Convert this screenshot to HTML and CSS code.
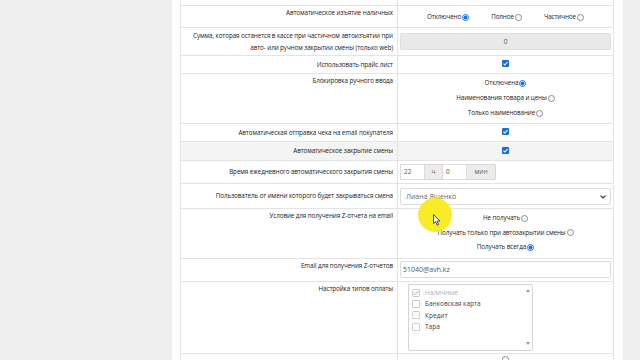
FILE: index.html
```html
<!DOCTYPE html>
<html lang="ru">
<head>
<meta charset="utf-8">
<title>Настройки</title>
<link rel="stylesheet" href="styles.css">
</head>
<body>
<div class="page">
  <div class="side"></div>
  <main class="panel">
    <div class="settings">
      <div class="row r0"><div class="lbl"></div><div class="val"></div></div>

      <div class="row r1">
        <div class="lbl">Автоматическое изъятие наличных</div>
        <div class="val hopts">
          <span class="opt">Отключено<i class="radio on"></i></span>
          <span class="opt">Полное<i class="radio"></i></span>
          <span class="opt">Частичное<i class="radio"></i></span>
        </div>
      </div>

      <div class="row r2">
        <div class="lbl">Сумма, которая останется в кассе при частичном автоизъятии при авто- или ручном закрытии смены (только web)</div>
        <div class="val"><div class="field disabled center">0</div></div>
      </div>

      <div class="row r3">
        <div class="lbl">Использовать прайс лист</div>
        <div class="val cbcell"><i class="check"></i></div>
      </div>

      <div class="row r4">
        <div class="lbl">Блокировка ручного ввода</div>
        <div class="val vopts">
          <span class="opt">Отключена<i class="radio on"></i></span>
          <span class="opt">Наименования товара и цены<i class="radio"></i></span>
          <span class="opt">Только наименование<i class="radio"></i></span>
        </div>
      </div>

      <div class="row r5">
        <div class="lbl">Автоматическая отправка чека на email покупателя</div>
        <div class="val cbcell"><i class="check"></i></div>
      </div>

      <div class="row r6 striped">
        <div class="lbl">Автоматическое закрытие смены</div>
        <div class="val cbcell"><i class="check"></i></div>
      </div>

      <div class="row r7">
        <div class="lbl">Время ежедневного автоматического закрытия смены</div>
        <div class="val">
          <div class="timegroup">
            <span class="tin">22</span><span class="addon a1">ч</span><span class="tin">0</span><span class="addon a2">мин</span>
          </div>
        </div>
      </div>

      <div class="row r8">
        <div class="lbl">Пользователь от имени которого будет закрываться смена</div>
        <div class="val">
          <div class="field select">Лиана Яшенко
            <svg class="chev" width="6" height="4" viewBox="0 0 6 4"><polyline points="0.6,0.6 3,3 5.4,0.6" fill="none" stroke="#333" stroke-width="1.2"/></svg>
          </div>
        </div>
      </div>

      <div class="row r9">
        <div class="lbl">Условие для получения Z-отчета на email</div>
        <div class="val vopts">
          <span class="opt">Не получать<i class="radio"></i></span>
          <span class="opt">Получать только при автозакрытии смены<i class="radio"></i></span>
          <span class="opt">Получать всегда<i class="radio on"></i></span>
        </div>
      </div>

      <div class="row r10">
        <div class="lbl">Email для получения Z-отчетов</div>
        <div class="val"><div class="field">51040@avh.kz</div></div>
      </div>

      <div class="row r11">
        <div class="lbl">Настройка типов оплаты</div>
        <div class="val">
          <div class="listbox">
            <div class="items">
              <div class="item dis"><i class="box ticked"></i>Наличные</div>
              <div class="item"><i class="box"></i>Банковская карта</div>
              <div class="item"><i class="box"></i>Кредит</div>
              <div class="item"><i class="box"></i>Тара</div>
            </div>
            <div class="scroll">
              <svg width="4" height="3" viewBox="0 0 4 3"><polygon points="0,3 2,0 4,3" fill="#999"/></svg>
              <svg width="4" height="3" viewBox="0 0 4 3"><polygon points="0,0 4,0 2,3" fill="#999"/></svg>
            </div>
          </div>
        </div>
      </div>

      <div class="row r12">
        <div class="lbl"></div>
        <div class="val cbcell"><i class="radio"></i></div>
      </div>
    </div>
  </main>
  <div class="side"></div>
</div>

<div class="spot"></div>
<svg class="cursor" width="8" height="12" viewBox="0 0 8 12"><path d="M0.5 0.5 L0.5 9.5 L2.6 7.6 L4.2 11.2 L5.6 10.6 L4.1 7.1 L7 7.1 Z" fill="#fff" stroke="#222" stroke-width="0.8" stroke-linejoin="round"/></svg>
</body>
</html>
```

FILE: styles.css
```css
* { box-sizing: border-box; }
html, body { margin: 0; padding: 0; }
body {
  background: #efefef;
  font-family: "Open Sans", "Noto Sans", sans-serif;
  font-size: 6.3px;
  letter-spacing: -0.1px;
  color: #222;
  width: 640px;
  height: 360px;
  overflow: hidden;
  position: relative;
}
.page { display: flex; height: 360px; }
.side { flex: 1; }
.page > .side:first-child { flex: 0 0 172px; }
.panel {
  flex: 0 0 450px;
  background: #fff;
  padding: 0 9px 0 8px;
}
.settings {
  width: 434px;
  border-left: 1px solid #e4e4e4;
  border-right: 1px solid #e4e4e4;
}
.row {
  display: grid;
  grid-template-columns: 217px 215px;
  border-bottom: 1px solid #e4e4e4;
}
.lbl {
  border-right: 1px solid #e4e4e4;
  text-align: right;
  line-height: 12px;
  padding: 3px 4px 0 4px;
}
.val { padding: 0 2px; }
.striped { background: #f4f4f4; }

.r0 { height: 6px; }
.r1 { height: 22px; }
.r2 { height: 28px; }
.r3 { height: 18px; }
.r4 { height: 50px; }
.r5 { height: 18px; }
.r6 { height: 19px; }
.r7 { height: 23px; }
.r8 { height: 25px; }
.r9 { height: 50px; }
.r10 { height: 23px; }
.r11 { height: 72px; }
.r12 { height: 20px; }
.r1 .lbl { padding-top: 1px; }
.r2 .lbl { padding-top: 2px; }
.r4 .lbl { padding-top: 1px; }
.r6 .lbl { padding-top: 3px; }
.r7 .lbl { padding-top: 5px; }
.r8 .lbl { padding-top: 6px; }
.r9 .lbl { padding-top: 1px; }
.r10 .lbl { padding-top: 1px; }
.r11 .lbl { padding-top: 1px; }

.opt { display: inline-flex; align-items: center; gap: 1px; line-height: 12px; white-space: nowrap; }
.hopts {
  display: flex;
  justify-content: center;
  gap: 22px;
  padding-top: 1px;
}
.vopts {
  display: flex;
  flex-direction: column;
  align-items: center;
  padding-top: 3px;
  gap: 3px;
}
.r9 .vopts { padding-top: 3px; gap: 2.5px; }

.radio {
  display: inline-block;
  width: 7px;
  height: 7px;
  border-radius: 50%;
  border: 1px solid #8a8a8a;
  background: #fff;
  flex: none;
}
.radio.on {
  border: 1px solid #1a73e8;
  background: radial-gradient(circle, #1a73e8 0 1.9px, #fff 2.1px);
}
.cbcell { display: flex; justify-content: center; align-items: flex-start; }
.r3 .val { padding-top: 4px; }
.r5 .val { padding-top: 4px; }
.r6 .val { padding-top: 5px; }
.r12 .val { padding-top: 2px; }
.check {
  display: block;
  width: 7px;
  height: 7px;
  border-radius: 1px;
  background: #1a6fd6 url("data:image/svg+xml;utf8,<svg xmlns='http://www.w3.org/2000/svg' viewBox='0 0 7 7'><polyline points='1.5,3.6 2.9,5 5.6,2' fill='none' stroke='white' stroke-width='1.1'/></svg>") center/7px 7px no-repeat;
}

.field {
  height: 17px;
  border: 1px solid #dcdcdc;
  border-radius: 2px;
  color: #555;
  padding: 0 2px;
  line-height: 15px;
  background: #fff;
  font-size: 7px;
  letter-spacing: 0;
}
.center { text-align: center; }
.r2 .val { padding-top: 5px; }
.field.disabled { background: #e9e9e9; border-color: #dedede; font-size: 6.5px; }
.r8 .val { padding-top: 4px; }
.select {
  display: flex;
  justify-content: space-between;
  align-items: center;
  padding: 0 4px 0 5px;
  font-size: 7px;
  color: #666;
}
.chev { flex: none; }
.r10 .val { padding-top: 2px; }

.r7 .val { padding-top: 3px; }
.timegroup { display: flex; height: 16px; font-size: 6.5px; letter-spacing: 0; }
.tin {
  width: 25px;
  border: 1px solid #dcdcdc;
  line-height: 14px;
  padding-left: 3px;
  color: #555;
}
.addon {
  border: 1px solid #d6d6d6;
  background: #ececec;
  line-height: 14px;
  text-align: center;
  color: #666;
}
.a1 { width: 18px; border-left: none; }
.a2 { width: 29px; border-left: none; border-radius: 0 2px 2px 0; }
.tin + .addon + .tin { border-left: none; width: 24px; }

.r11 .val { padding: 2px 0 0 10px; }
.listbox {
  width: 125px;
  height: 67px;
  border: 1px solid #d4d4d4;
  border-radius: 2px;
  display: flex;
  justify-content: space-between;
  padding: 1px 2px 3px 3px;
}
.items { display: flex; flex-direction: column; padding-top: 1px; font-size: 6.5px; letter-spacing: 0; }
.item {
  display: flex;
  align-items: center;
  gap: 5px;
  height: 11.3px;
  color: #444;
}
.item.dis { color: #b0b0b0; }
.box {
  display: inline-block;
  width: 8px;
  height: 8px;
  border: 1px solid #cfcfcf;
  border-radius: 1px;
  background: #fff;
}
.box.ticked {
  background: #fff url("data:image/svg+xml;utf8,<svg xmlns='http://www.w3.org/2000/svg' viewBox='0 0 8 8'><polyline points='1.5,4 3.2,5.6 6.5,2' fill='none' stroke='%23aaa' stroke-width='1'/></svg>") center/8px 8px no-repeat;
}
.scroll {
  display: flex;
  flex-direction: column;
  justify-content: space-between;
  padding: 3px 0 2px;
}

.spot {
  position: absolute;
  left: 418px;
  top: 198px;
  width: 34px;
  height: 34px;
  border-radius: 50%;
  background: rgba(246, 234, 16, 0.9);
}
.cursor { position: absolute; left: 433px; top: 214px; }
```
